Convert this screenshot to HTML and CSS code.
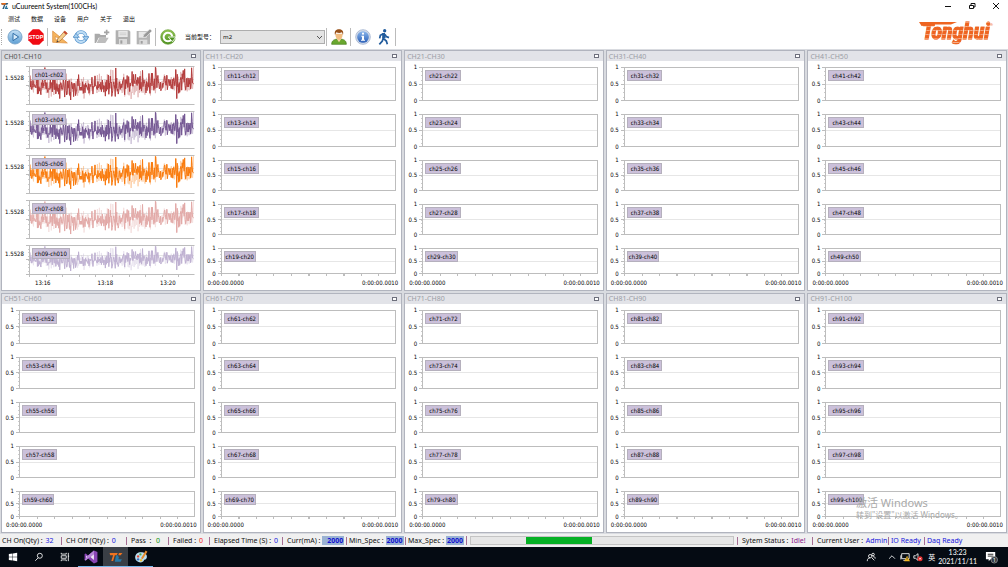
FILE: index.html
```html
<!DOCTYPE html>
<html lang="zh-CN">
<head>
<meta charset="utf-8">
<meta name="viewport" content="width=device-width, initial-scale=1">
<title>uCuureent System(100CHs)</title>
<link rel="stylesheet" href="styles.css">
</head>
<body>
<svg class="defs" aria-hidden="true">
  <defs>
    <linearGradient id="blue" x1="0" y1="0" x2="0" y2="1"><stop offset="0" stop-color="#c4e0f5"/><stop offset="1" stop-color="#5e9fd4"/></linearGradient>
    <linearGradient id="info" x1="0" y1="0" x2="0" y2="1"><stop offset="0" stop-color="#8db8ec"/><stop offset="1" stop-color="#2a5fb8"/></linearGradient>
    <linearGradient id="green" x1="0" y1="0" x2="0" y2="1"><stop offset="0" stop-color="#93c552"/><stop offset="1" stop-color="#4d8f22"/></linearGradient>
  </defs>
</svg>

<header class="titlebar">
  <svg class="app-icon" viewBox="0 0 24 24" aria-hidden="true"><path d="M1 3h21l-3 5h-6L9 21H4L9 8H2z" fill="#2d5f80"/><path d="M1 3h14l-2 5H2z" fill="#e06a1b"/><path d="M15 11l-4 10h9l2-4h-5l2-6z" fill="#1d6f9c"/></svg>
  <h1 class="title">uCuureent System(100CHs)</h1>
  <div class="window-buttons">
    <button type="button" aria-label="最小化"><svg viewBox="0 0 8 8"><path d="M1 4.500h6"/></svg></button>
    <button type="button" aria-label="还原"><svg viewBox="0 0 8 8"><path d="M1.500 3.500h4v3h-4zM3 3V1.500h4v3.500H6"/></svg></button>
    <button type="button" aria-label="关闭"><svg viewBox="0 0 8 8"><path d="M1 1l6 6M7 1L1 7"/></svg></button>
  </div>
</header>

<div class="commands">
  <div class="command-rows">
    <nav class="menu">
      <button type="button">测试</button><button type="button">数据</button><button type="button">设备</button><button type="button">用户</button><button type="button">关于</button><button type="button">退出</button>
    </nav>
    <div class="toolbar">
      <span class="grip"></span>
      <button type="button" aria-label="开始"><svg viewBox="0 0 24 24"><circle cx="12" cy="12" r="10.500" fill="url(#blue)" stroke="#7ba7cc" stroke-width="1.500"/><path d="M9 6.500l8.500 5.500L9 17.500z" fill="#d8ecfa" stroke="#2f6ea8" stroke-width="1.500"/></svg></button>
      <button type="button" aria-label="停止"><svg viewBox="0 0 24 24"><path d="M7.200.5h9.600l6.700 6.700v9.600l-6.700 6.700H7.200L.5 16.800V7.200z" fill="#f00a12"/><text x="12" y="15.500" class="stop-text">STOP</text></svg></button>
      <span class="separator"></span>
      <button type="button" aria-label="设计"><svg viewBox="0 0 24 24"><path d="M1 3v17l22 1z" fill="#f5b45e" stroke="#d98a3a"/><path d="M5 11v5l8 1z" fill="#fff" stroke="#d98a3a"/><path d="M7 20l1.500-5L19 3l4 3.500L12 18z" fill="#f6cf8d" stroke="#a5672c"/><path d="M17 5l2-2 4 3.500-2 2z" fill="#c94a33"/><path d="M7 20l.9-3 2 2z" fill="#444"/></svg></button>
      <button type="button" aria-label="刷新"><svg viewBox="0 0 24 24"><circle cx="12" cy="12" r="7.500" fill="none" stroke="#4d8ecb" stroke-width="5"/><circle cx="12" cy="12" r="7.500" fill="none" stroke="#bddcf4" stroke-width="3.400"/><path d="M14.500 11.500H24l-4.500 6zM9.500 12.500H0l4.500-6z" fill="#a9d1f0" stroke="#3c7fbe"/></svg></button>
      <button type="button" aria-label="打开" disabled><svg viewBox="0 0 24 24"><path d="M1 7h7l2 2h8v4H7l-4 8H1z" fill="#aaa"/><path d="M8 13h14l-5 8H4z" fill="#bdbdbd"/><path d="M15 5h8M19 1v8" stroke="#a5a5a5" stroke-width="2.500"/></svg></button>
      <button type="button" aria-label="保存" disabled><svg viewBox="0 0 24 24"><path d="M1 2h20l2 2v19H1z" fill="#b0b0b0"/><path d="M5 3h14v9H5z" fill="#e8e8e8"/><path d="M6 15h12v8H6z" fill="#dcdcdc"/><path d="M8 17h3v5H8z" fill="#a0a0a0"/><path d="M7 6h10M7 8.500h10" stroke="#c4c4c4"/></svg></button>
      <button type="button" aria-label="另存为" disabled><svg viewBox="0 0 24 24"><path d="M1 3h20v20H1z" fill="#b4b4b4"/><path d="M4 4h12v9H4z" fill="#e8e8e8"/><path d="M5 16h12v7H5z" fill="#dcdcdc"/><path d="M7 18h3v4H7z" fill="#a0a0a0"/><path d="M10 13l2-5 9-8 3 3-9 9z" fill="#999" stroke="#e8e8e8"/></svg></button>
      <span class="separator"></span>
      <button type="button" aria-label="重新载入"><svg viewBox="0 0 24 24"><circle cx="12" cy="12" r="11" fill="url(#green)" stroke="#6fa43c"/><path d="M17 16a6.500 6.500 0 1 1 1.300-5" fill="none" stroke="#fff" stroke-width="3"/><path d="M12.500 12H24l-5.500 7z" fill="#4f9422" stroke="#fff" stroke-width="1.300"/></svg></button>
      <label class="model-label" for="model">当前型号：</label>
      <select id="model" class="model"><option>m2</option></select>
      <span class="separator"></span>
      <button type="button" aria-label="用户"><svg viewBox="0 0 24 24"><path d="M1 23c0-6 4-8 11-8s11 2 11 8z" fill="#69a72f" stroke="#457b1d"/><path d="M8 14h8l-4 6z" fill="#f5d6a5"/><path d="M6.500 7c0 6 2.500 9 5.500 9s5.500-3 5.500-9z" fill="#f2bd80"/><path d="M6 9C4.500 2.500 8 .5 12 .5S19.500 2.500 18 9l-1.500-4C13 7 10 6 8 5z" fill="#975018"/></svg></button>
      <span class="separator"></span>
      <button type="button" aria-label="信息"><svg viewBox="0 0 24 24"><circle cx="12" cy="12" r="11" fill="#d4dce9" stroke="#92a6c8"/><circle cx="12" cy="12" r="8.800" fill="url(#info)"/><circle cx="12" cy="7" r="1.600" fill="#fff"/><path d="M9.500 10h4v6h1.500v1.500h-6V16h1.500v-4.500H9.500z" fill="#fff"/></svg></button>
      <button type="button" aria-label="退出系统"><svg viewBox="0 0 24 24"><circle cx="13" cy="2.600" r="2.500" fill="#215b9c"/><path d="M11.500 6.500L11 14l4.500 4 1.500 5M11 13l-1.500 5L5 23M11 7l-4.500 2.500L5.500 14M13.500 8l2 3.500 4 1.500" fill="none" stroke="#215b9c" stroke-width="2.600"/><path d="M9.500 6h4l1 8h-5z" fill="#215b9c"/></svg></button>
      <span class="separator"></span>
    </div>
  </div>
  <div class="brand">
    <svg class="brand-bar" viewBox="0 0 44 4" preserveAspectRatio="none" aria-hidden="true"><path d="M0 0h44l-7 2.500H14L3 4z" fill="#ee6420"/></svg>
    <span class="brand-name">Tonghui</span><sup class="brand-mark">®</sup>
  </div>
</div>

<main class="panels" id="panels"></main>

<footer class="status">
  <span class="cell w59">CH On(Qty) : <b class="blue">32</b></span>
  <span class="cell w65 bar">CH Off (Qty) : <b class="blue">0</b></span>
  <span class="cell w42 bar">Pass &nbsp;: &nbsp;<b class="green">0</b></span>
  <span class="cell w41 bar">Failed : <b class="red">0</b></span>
  <span class="cell w73 bar">Elapsed Time (S) : <b class="blue">0</b></span>
  <span class="cell w64 bar">Curr(mA) : <b class="value wide">2000</b></span>
  <span class="cell w59 bar tight">Min_Spec : <b class="value">2000</b></span>
  <span class="cell w61 bar tight">Max_Spec : <b class="value">2000</b></span>
  <span class="track bar"><span class="progress" role="progressbar" aria-label="测试进度"><span class="progress-block"></span></span></span>
  <span class="cell w75 bar">Sytem Status : <b class="purple">Idle!</b></span>
  <span class="cell w76 bar">Current User : <b class="blue">Admin</b></span>
  <span class="cell w36 bar tight"><b class="blue">IO Ready</b></span>
  <span class="cell w84 bar tight"><b class="blue">Daq Ready</b></span>
</footer>

<div class="taskbar">
  <button type="button" class="task" aria-label="开始菜单"><svg viewBox="0 0 12 12" fill="#fff"><path d="M1 2.500l4.500-.7v3.900H1zM6 1.700l5-.7v4.700H6zM1 6.300h4.500v3.900L1 9.500zM6 6.300h5V11l-5-.7z"/></svg></button>
  <button type="button" class="task" aria-label="搜索"><svg viewBox="0 0 12 12" fill="none" stroke="#fff"><circle cx="7" cy="4.500" r="3"/><path d="M5 7L1.500 10.500"/></svg></button>
  <button type="button" class="task" aria-label="任务视图"><svg viewBox="0 0 12 12" fill="none" stroke="#fff"><path d="M1.500 1v1.500h6V1M1.500 4.500h6v3h-6zM1.500 11V9.500h6V11M10 1v10M9.500 5h1.500"/></svg></button>
  <button type="button" class="task open" aria-label="Visual Studio"><svg class="large" viewBox="0 0 24 24"><path d="M17 1l6 2.500v17L17 23 7 14.500 3 18l-2-1V7l2-1 4 3.500z" fill="#8a46b5"/><path d="M17 7v10l-6-5zM3.500 9.500v5L6 12z" fill="#f0e6f6"/><path d="M17 1v6l-6 5-4 2.500L3 18l-2-1 6-7.500z" fill="#b585d6"/></svg></button>
  <button type="button" class="task open current" aria-label="uCuureent System"><svg class="large" viewBox="0 0 24 24"><path d="M1 5h14l-2 4h-3L7 19H4L7 9H2z" fill="#f07420"/><path d="M15 9h-3l-2 11h10l2-4h-6l1-3z" fill="#2779a6"/><path d="M17 5h6l-3 4h-4z" fill="#f07420"/></svg></button>
  <button type="button" class="task open" aria-label="画图"><svg class="large" viewBox="0 0 24 24"><path d="M2 13C2 6 8 3 14 4s9 5 8 9-4 3-5 5-4 4-8 3-7-4-7-8z" fill="#b9dff2"/><circle cx="7" cy="11" r="2" fill="#e04a38"/><circle cx="11" cy="7.500" r="2" fill="#52a849"/><circle cx="7" cy="16" r="2" fill="#3a72c4"/><circle cx="12" cy="17.500" r="2" fill="#e8bd33"/><path d="M12 14L20 1l3 2-8 13z" fill="#e48b2d"/></svg></button>
  <div class="tray">
    <svg class="tray-icon people" viewBox="0 0 12 12"><circle cx="5" cy="5" r="2"/><path d="M1.500 11c0-3 1.500-4 3.500-4M7 7l3 3"/><circle cx="8.500" cy="3" r="1.500"/><path d="M8 6c2-1 3 0 3 2"/></svg>
    <svg class="tray-icon" viewBox="0 0 12 12"><path d="M2.500 8L6 4.500 9.500 8"/></svg>
    <svg class="tray-icon" viewBox="0 0 12 12"><path d="M2 2h9v6H2zM1 4v5M4 10h4"/><path d="M8.500 4.500L12 11H5z" fill="#f5b921" stroke="none"/><path d="M8.500 6.500v2.500" stroke="#222"/></svg>
    <svg class="tray-icon" viewBox="0 0 12 12"><path d="M1 4.500h2L6 2v8L3 7.500H1z"/><circle cx="8.500" cy="8" r="3" fill="#e02828" stroke="none"/><path d="M7.500 7l2 2M9.500 7l-2 2"/></svg>
    <span class="ime">英</span>
    <span class="clock"><time>13:23</time><span>2021/11/11</span></span>
    <svg class="notice" viewBox="0 0 14 14"><path d="M1 1h10v8H6l-2 2V9H1z" fill="#fff"/><path d="M3 3.500h6M3 5.500h6" stroke="#222"/><circle cx="10" cy="9.500" r="3.500" fill="#333a42" stroke="#aaa" stroke-width=".7"/><text x="10" y="11.500" class="notice-count">1</text></svg>
  </div>
</div>

<aside class="watermark"><strong>激活 Windows</strong><span>转到"设置"以激活 Windows。</span></aside>
<script src="app.js"></script>
</body>
</html>
```

FILE: styles.css
```css
* { box-sizing: border-box; }

body {
  margin: 0;
  min-height: 100vh;
  display: flex;
  flex-direction: column;
  background: #fff;
  color: #111;
  font: 6px/8px "Noto Sans", "Noto Sans CJK SC", sans-serif;
}

button, select { font: inherit; color: inherit; }
button { border: 0; padding: 0; background: none; }
.defs { position: absolute; width: 0; height: 0; }

.titlebar { display: flex; align-items: center; height: 12px; padding-left: 1px; }
.app-icon { width: 8px; height: 8px; margin-right: 3px; }
.title { margin: 0; flex: 1; font: 400 7px/12px Lato, "Noto Sans", sans-serif; color: #000; }
.window-buttons { display: flex; }
.window-buttons button { width: 24px; height: 12px; display: grid; place-items: center; }
.window-buttons svg { width: 8px; height: 8px; fill: none; stroke: #111; stroke-width: 1; }

.commands { display: flex; justify-content: space-between; height: 37px; }
.menu { display: flex; gap: 11px; height: 13px; padding-left: 8px; align-items: center; }
.menu button { font-family: "Noto Sans CJK SC", sans-serif; line-height: 12px; }
.toolbar { display: flex; align-items: center; height: 24px; padding-left: 1px; }
.toolbar button { width: 21px; height: 20px; display: grid; place-items: center; flex: none; }
.toolbar svg { width: 16px; height: 16px; }
.grip { width: 3px; height: 16px; border-left: 1px dotted #aaa; }
.separator { width: 1px; height: 18px; margin: 0 1px; background: #bbb; }
.stop-text { font: 700 8px "Liberation Sans", sans-serif; fill: #fff; text-anchor: middle; }
.model-label { margin: 0 5px 0 7px; white-space: nowrap; font-family: "Noto Sans CJK SC", sans-serif; }
.model {
  appearance: none;
  width: 105px;
  height: 14px;
  padding: 0 2px;
  border: 1px solid #adadad;
  border-radius: 0;
  background-color: #e3e3e3;
  background-image:
    linear-gradient(45deg, transparent 40%, #555 40% 60%, transparent 60%),
    linear-gradient(-45deg, transparent 40%, #555 40% 60%, transparent 60%);
  background-size: 3px 3px;
  background-repeat: no-repeat;
  background-position: right 4px center, right 2px center;
}

.brand { position: relative; margin: 8px 15px 0 0; height: 24px; color: #ee6420; white-space: nowrap; }
.brand-bar { position: absolute; left: -3px; top: 2px; width: 38px; height: 4px; }
.brand-name {
  font: italic 700 22px/24px "Liberation Sans Narrow", "Roboto Condensed", "Liberation Sans", sans-serif;
  color: transparent;
  background: repeating-linear-gradient(#ee6420 0 3px, #f6ae89 3px 4px);
  background-clip: text;
  -webkit-text-stroke: 1px #ee642080;
}
.brand-mark { font-size: 4px; line-height: 4px; vertical-align: 13px; }

.panels {
  flex: 1;
  display: grid;
  grid-template: repeat(2, 1fr) / repeat(5, 1fr);
  gap: 2px;
  padding: 1px;
  background: #d9dbe0;
}
.panel { display: flex; flex-direction: column; border: 1px solid #b1b4be; background: #fff; min-width: 0; }
.panel-head {
  display: flex;
  justify-content: space-between;
  align-items: center;
  height: 10px;
  padding: 0 4px 0 2px;
  background: #e2e3e8;
  color: #9b9da5;
}
.panel.active .panel-head { background: #d7d9de; color: #555; }
.panel-head h2 { margin: 0; font-size: 7px; line-height: 9px; font-weight: 400; }
.maximize { width: 5px; height: 4px; border: 1px solid #6d6f7c; background: #fff; }

.charts {
  flex: 1;
  display: grid;
  grid-template-rows: 34fr 32fr 31fr 31fr 26fr;
  gap: 13px;
  padding: 6px 5px 4px 0;
}
.chart { display: grid; grid-template-columns: 17px 1fr; }
.charts, .x-labels { font-family: "DejaVu Sans Condensed", "Noto Sans", sans-serif; color: #000; }
.y-labels { display: flex; flex-direction: column; justify-content: space-between; margin: -4px 0; padding-right: 5px; text-align: right; }
.plot { position: relative; border: 1px solid #bdbdbd; background: linear-gradient(#e6e6e6, #e6e6e6) 0 50% / 100% 1px no-repeat; }
.plot::before {
  content: "";
  position: absolute;
  inset: -1px auto -1px -4px;
  width: 3px;
  background:
    linear-gradient(#bdbdbd, #bdbdbd) 0 0 / 3px 1px no-repeat,
    linear-gradient(#bdbdbd, #bdbdbd) 0 50% / 3px 1px no-repeat,
    linear-gradient(#bdbdbd, #bdbdbd) 0 100% / 3px 1px no-repeat,
    repeating-linear-gradient(#ccc 0 1px, transparent 1px 12.5%) 2px 0 / 1px 100% no-repeat;
}
.chart:last-child .plot::after {
  content: "";
  position: absolute;
  inset: 100% -1px auto -1px;
  height: 3px;
  background: repeating-linear-gradient(to right, #bdbdbd 0 1px, transparent 1px 10%);
}
.legend {
  position: absolute;
  left: 2px;
  top: 2px;
  padding: 0 2px 0 3px;
  border: 1px solid #b5b0bd;
  background: #cbc0da;
  line-height: 9px;
  white-space: nowrap;
}
.chart:last-child .legend { padding: 0 1px; }
.x-labels { display: flex; justify-content: space-between; padding: 0 3px 3px 4px; }

.panel.active .charts { grid-template-rows: 39fr 39fr 39fr 39fr 30fr; gap: 6px; padding: 5px 5px 4px 0; }
.panel.active .chart { grid-template-columns: 27px 1fr; }
.panel.active .y-labels { justify-content: flex-start; margin: 0; padding-top: 8px; }
.panel.active .chart:last-child .y-labels { padding-top: 5px; }
.panel.active .plot { border-right-color: transparent; background-position: 0 33%; }
.panel.active .legend { padding: 0 2px; }
.panel.active .x-labels { padding: 0 24px 3px 33px; }
.wave { position: absolute; inset: 0; width: 100%; height: 100%; fill: none; stroke: currentColor; }
.wave path { vector-effect: non-scaling-stroke; stroke-width: 1; }
.wave .noise { opacity: .35; }
.red-line { color: #b43c3c; }
.violet-line { color: #735693; }
.orange-line { color: #f97a0c; }
.pink-line { color: #e2a9a7; }
.lilac-line { color: #bfb1d2; }

.status {
  display: flex;
  align-items: center;
  height: 13px;
  padding-left: 2px;
  background: #f0f0f0;
  font-size: 7px;
  line-height: 10px;
  white-space: nowrap;
}
.status b { font-weight: 400; margin-left: 1px; }
.cell { flex: none; }
.bar { border-left: 1px solid #a56e93; line-height: 8px; padding-left: 4px; }
.tight { padding-left: 2px; }
.tight b.blue { margin-left: 0; }
.w36 { width: 36px; } .w41 { width: 41px; } .w42 { width: 42px; } .w59 { width: 59px; }
.w61 { width: 61px; } .w64 { width: 64px; } .w65 { width: 65px; } .w73 { width: 73px; }
.w75 { width: 75px; } .w76 { width: 76px; } .w84 { width: 84px; }
.blue { color: #1414dc; }
.green { color: #0b8f0b; }
.red { color: #f02020; }
.purple { color: #8b1a8b; }
.status .value { margin-left: 0; background: #9ab2d3; color: #1111d0; font-weight: 700; padding: 0 1px; }
.status .wide { padding-left: 5px; }
.track { flex: 1; padding-left: 3px; padding-right: 3px; }
.progress { display: block; height: 9px; border: 1px solid #c4c4c4; background: #e6e6e6; }
.progress-block { display: block; width: 25%; height: 100%; margin-left: 21%; background: #06b025; }

.taskbar { display: flex; height: 20px; background: #050b13; color: #fff; }
.task { width: 26px; display: grid; place-items: center; }
.task svg { width: 10px; height: 10px; }
.task svg.large { width: 14px; height: 14px; }
.task.open { width: 25px; border-bottom: 1px solid #76b9ed; }
.current { background: #3a3f46; }
.tray { display: flex; align-items: center; gap: 3px; margin-left: auto; padding-right: 10px; }
.tray-icon { width: 10px; height: 10px; fill: none; stroke: #fff; }
.people { margin-right: 8px; }
.ime { margin-left: 2px; font: 7px/10px "Noto Sans CJK SC", sans-serif; }
.clock { display: flex; flex-direction: column; align-items: center; font: 7px/9px Lato, "Noto Sans", sans-serif; }
.notice { width: 13px; height: 13px; margin-left: 5px; }
.notice-count { font: 6px "Noto Sans", sans-serif; fill: #fff; text-anchor: middle; }

.watermark {
  position: absolute;
  right: 48px;
  bottom: 46px;
  display: flex;
  flex-direction: column;
  color: #a9a9a9;
  pointer-events: none;
  width: 104px;
  white-space: nowrap;
}
.watermark strong { font-size: 11px; line-height: 13px; font-weight: 400; }
.watermark span { font-size: 8px; line-height: 12px; }
```

FILE: app.js
```js
const colours = ["red", "violet", "orange", "pink", "lilac"];
const pad = (n) => String(n).padStart(2, "0");

// Repeatable random numbers, so all channels share the same trace.
function generator(seed) {
  return () => {
    seed = (seed * 16807) % 2147483647;
    return seed / 2147483647;
  };
}

function trace(seed, spread) {
  const next = generator(seed);
  const points = [];
  for (let x = 0; x <= 330; x += 1) {
    const drift = x > 180 ? Math.min((x - 180) / 8, 7) : 0;
    const noise = (next() + next() + next() - 1.5) * spread;
    const spike = next() > 0.9 ? spread * 0.9 : 0;
    let y = 54 - drift + noise - spike;
    if (x === 82) y = 90;
    if (x === 72) y = 18;
    if (x === 294) y = 7;
    if (x === 296) y = 86;
    points.push(x + " " + y.toFixed(1));
  }
  return "M" + points.join("L");
}

function chart(panel, row) {
  const first = panel * 10 + row * 2 + 1;
  const live = panel === 0;
  const last = live && row === 4 ? "010" : pad(first + 1);
  const labels = live ? ["1.5528"] : ["1", "0.5", "0"];
  const wave = live
    ? `<svg class="wave ${colours[row]}-line" viewBox="0 0 330 100" preserveAspectRatio="none" aria-hidden="true">
         <path class="noise" d="${trace(911, 27)}"/><path d="${trace(77, 26)}"/></svg>`
    : "";
  return `<div class="chart">
    <div class="y-labels">${labels.map((t) => `<span>${t}</span>`).join("")}</div>
    <div class="plot">${wave}<span class="legend">ch${pad(first)}-ch${last}</span></div>
  </div>`;
}

function panel(index) {
  const name = `CH${pad(index * 10 + 1)}-CH${index * 10 + 10}`;
  const times = index === 0 ? ["13:16", "13:18", "13:20"] : ["0:00:00.0000", "0:00:00.0010"];
  return `<section class="panel${index === 0 ? " active" : ""}">
    <header class="panel-head"><h2>${name}</h2><button type="button" class="maximize" aria-label="最大化 ${name}"></button></header>
    <div class="charts">${[0, 1, 2, 3, 4].map((row) => chart(index, row)).join("")}</div>
    <div class="x-labels">${times.map((t) => `<span>${t}</span>`).join("")}</div>
  </section>`;
}

document.getElementById("panels").innerHTML = Array.from({ length: 10 }, (_, i) => panel(i)).join("");
```
